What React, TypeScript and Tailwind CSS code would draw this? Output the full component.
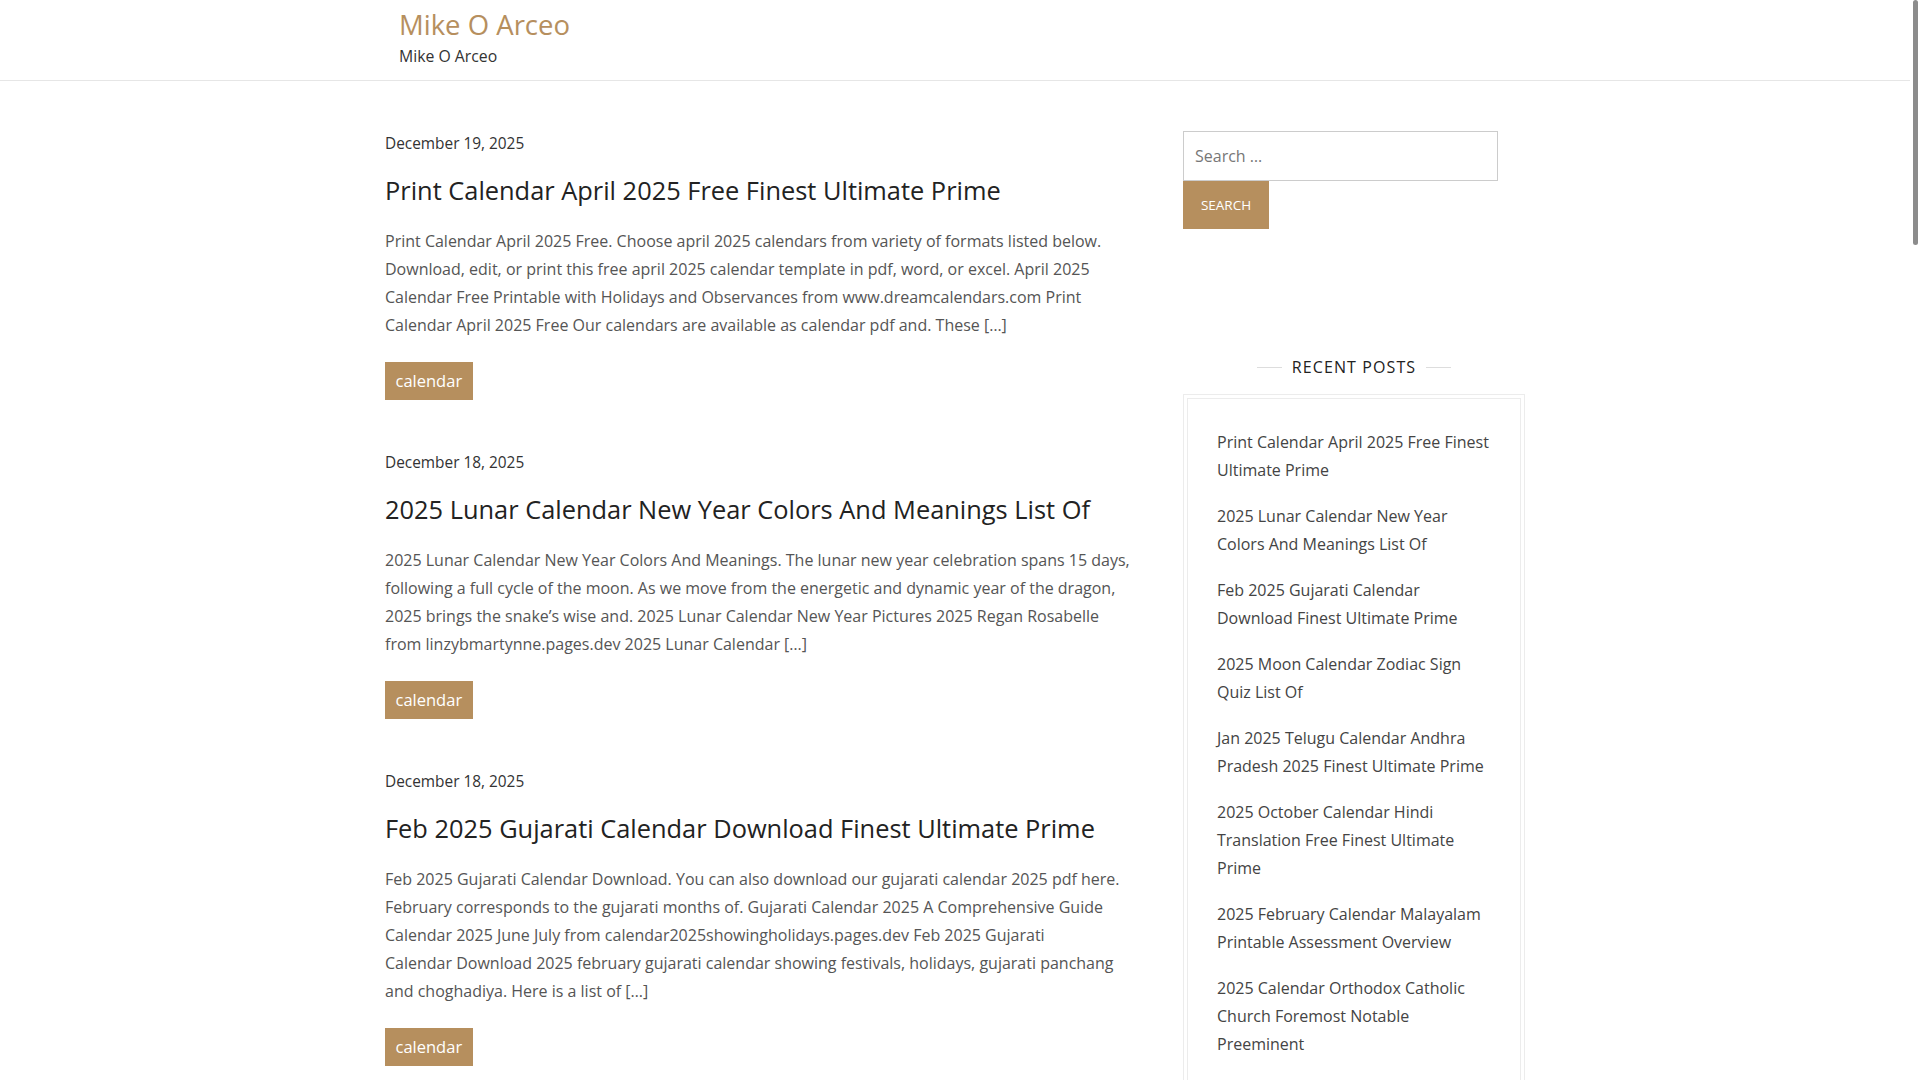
import React from 'react';

interface Post {
  date: string;
  title: string;
  // excerpt lines, as the theme trims them
  lines: string[];
}

const posts: Post[] = [
  {
    date: 'December 19, 2025',
    title: 'Print Calendar April 2025 Free Finest Ultimate Prime',
    lines: [
      'Print Calendar April 2025 Free. Choose april 2025 calendars from variety of formats listed below.',
      'Download, edit, or print this free april 2025 calendar template in pdf, word, or excel. April 2025',
      'Calendar Free Printable with Holidays and Observances from www.dreamcalendars.com Print',
      'Calendar April 2025 Free Our calendars are available as calendar pdf and. These […]',
    ],
  },
  {
    date: 'December 18, 2025',
    title: '2025 Lunar Calendar New Year Colors And Meanings List Of',
    lines: [
      '2025 Lunar Calendar New Year Colors And Meanings. The lunar new year celebration spans 15 days,',
      'following a full cycle of the moon. As we move from the energetic and dynamic year of the dragon,',
      '2025 brings the snake’s wise and. 2025 Lunar Calendar New Year Pictures 2025 Regan Rosabelle',
      'from linzybmartynne.pages.dev 2025 Lunar Calendar […]',
    ],
  },
  {
    date: 'December 18, 2025',
    title: 'Feb 2025 Gujarati Calendar Download Finest Ultimate Prime',
    lines: [
      'Feb 2025 Gujarati Calendar Download. You can also download our gujarati calendar 2025 pdf here.',
      'February corresponds to the gujarati months of. Gujarati Calendar 2025 A Comprehensive Guide',
      'Calendar 2025 June July from calendar2025showingholidays.pages.dev Feb 2025 Gujarati',
      'Calendar Download 2025 february gujarati calendar showing festivals, holidays, gujarati panchang',
      'and choghadiya. Here is a list of […]',
    ],
  },
  {
    date: 'December 17, 2025',
    title: '2025 Moon Calendar Zodiac Sign Quiz List Of',
    lines: [
      '2025 Moon Calendar Zodiac Sign Quiz. Track every new moon and full moon of the year along with',
      'the zodiac sign the moon passes through. Printable moon phase calendars for 2025 are available',
      'in pdf and image formats. 2025 Moon Calendar Zodiac Sign from calendar.pages.dev Here is a list',
      'of […]',
    ],
  },
  {
    date: 'December 17, 2025',
    title: 'Jan 2025 Telugu Calendar Andhra Pradesh 2025 Finest Ultimate Prime',
    lines: [
      'Jan 2025 Telugu Calendar Andhra Pradesh 2025. Check the telugu calendar for january 2025 with',
      'festivals, tithi, nakshatram and muhurtham timings for andhra pradesh and telangana. Download the',
      'telugu calendar 2025 pdf for free. Jan 2025 Telugu Calendar from telugucalendar.pages.dev Here',
      'are the […]',
    ],
  },
  {
    date: 'December 16, 2025',
    title: '2025 October Calendar Hindi Translation Free Finest Ultimate Prime',
    lines: [
      '2025 October Calendar Hindi Translation Free. Get the october 2025 calendar with hindi month names,',
      'festivals and holidays. Print this free calendar template in pdf, word, or excel format. 2025',
      'October Calendar Hindi from hindicalendar2025.pages.dev Our calendars are available as […]',
    ],
  },
  {
    date: 'December 16, 2025',
    title: '2025 February Calendar Malayalam Printable Assessment Overview',
    lines: [
      '2025 February Calendar Malayalam Printable. Malayalam calendar 2025 february with kerala festivals,',
      'holidays and auspicious days. Download the printable malayalam calendar for free. 2025 February',
      'Calendar Malayalam from kalenderkerala.pages.dev These printable calendars […]',
    ],
  },
  {
    date: 'December 15, 2025',
    title: '2025 Calendar Orthodox Catholic Church Foremost Notable Preeminent',
    lines: [
      '2025 Calendar Orthodox Catholic Church. The orthodox church calendar lists the feasts and fasts of',
      'the liturgical year. In 2025 easter falls on the same date for both churches. 2025 Calendar',
      'Orthodox Catholic Church from orthodoxcalendar.pages.dev Here is the full list of […]',
    ],
  },
];

const recent = [
  'Print Calendar April 2025 Free Finest Ultimate Prime',
  '2025 Lunar Calendar New Year Colors And Meanings List Of',
  'Feb 2025 Gujarati Calendar Download Finest Ultimate Prime',
  '2025 Moon Calendar Zodiac Sign Quiz List Of',
  'Jan 2025 Telugu Calendar Andhra Pradesh 2025 Finest Ultimate Prime',
  '2025 October Calendar Hindi Translation Free Finest Ultimate Prime',
  '2025 February Calendar Malayalam Printable Assessment Overview',
  '2025 Calendar Orthodox Catholic Church Foremost Notable Preeminent',
  '2025 Hindu Calendar Telugu Printable Free Finest Ultimate Prime',
  '2025 Calendar Printable With Holidays Uk Foremost Notable',
];

export default function App() {
  return (
    <div className="relative bg-white font-['Open_Sans',sans-serif] text-[#555]">
      {/* window scrollbar, as in the capture */}
      <div className="fixed top-0 right-0 z-10 h-screen w-[10px] bg-white">
        <div className="ml-[3px] h-[245px] w-[5px] rounded-full bg-[#8c8c8c]" />
      </div>

      <div className="mr-[10px]">
        {/* Header */}
        <header className="border-b border-[#e6e6e6]">
          <div className="mx-auto h-[80px] w-[1140px] px-[14px] pt-[8px]">
            <a href="#" className="block text-[27.5px] font-medium leading-[33px] text-[#b68f5e]">
              Mike O Arceo
            </a>
            <p className="mt-[3px] text-[15.8px] leading-[24px] text-[#333]">Mike O Arceo</p>
          </div>
        </header>

        <div className="mx-auto flex w-[1140px] justify-between pt-[49px] pb-20">
          {/* Posts */}
          <main className="w-[750px]">
            {posts.map((p, i) => (
              <article key={i} className="mb-[49px]">
                <div className="text-[15.4px] leading-[28px] text-[#333]">{p.date}</div>
                <h2 className="mt-[12px] text-[25.4px] font-medium leading-[40px] text-[#222]">
                  {p.title}
                </h2>
                <p className="mt-[17px] text-[16px] leading-[28px] text-[#555]">
                  {p.lines.map((l, j) => (
                    <React.Fragment key={j}>
                      {j > 0 && <br />}
                      {l}
                    </React.Fragment>
                  ))}
                </p>
                <a
                  href="#"
                  className="mt-[23px] inline-flex h-[38px] items-center bg-[#b68f5e] px-[10.5px] text-[16.5px] text-white"
                >
                  calendar
                </a>
              </article>
            ))}
          </main>

          {/* Sidebar */}
          <aside className="w-[342px] pt-px">
            <form className="w-[315px]">
              <input
                type="search"
                placeholder="Search …"
                className="block h-[50px] w-full border border-[#ccc] px-[11px] text-[16px] text-[#333] outline-none placeholder:text-[#777]"
              />
              <button
                type="button"
                className="block h-[48px] w-[86px] bg-[#b68f5e] text-[13.5px] uppercase text-white"
              >
                Search
              </button>
            </form>

            <div className="mt-[126px] flex items-center justify-center gap-[10px]">
              <span className="h-px w-[25px] bg-[#ddd]" />
              <h3 className="text-[16px] font-medium uppercase leading-[24px] tracking-[1.1px] text-[#222]">
                Recent Posts
              </h3>
              <span className="h-px w-[25px] bg-[#ddd]" />
            </div>

            <div className="mt-[15px] border border-[#ececec] p-[3px]">
              <ul className="space-y-[18px] border border-[#ececec] pt-[29px] pb-[30px] pr-[26px] pl-[29px]">
                {recent.map((r) => (
                  <li key={r}>
                    <a href="#" className="text-[16px] leading-[28px] text-[#444]">
                      {r}
                    </a>
                  </li>
                ))}
              </ul>
            </div>
          </aside>
        </div>

        <footer className="border-t border-[#e6e6e6] py-[30px] text-center text-[15px] text-[#555]">
          Copyright © 2025 Mike O Arceo
        </footer>
      </div>
    </div>
  );
}
